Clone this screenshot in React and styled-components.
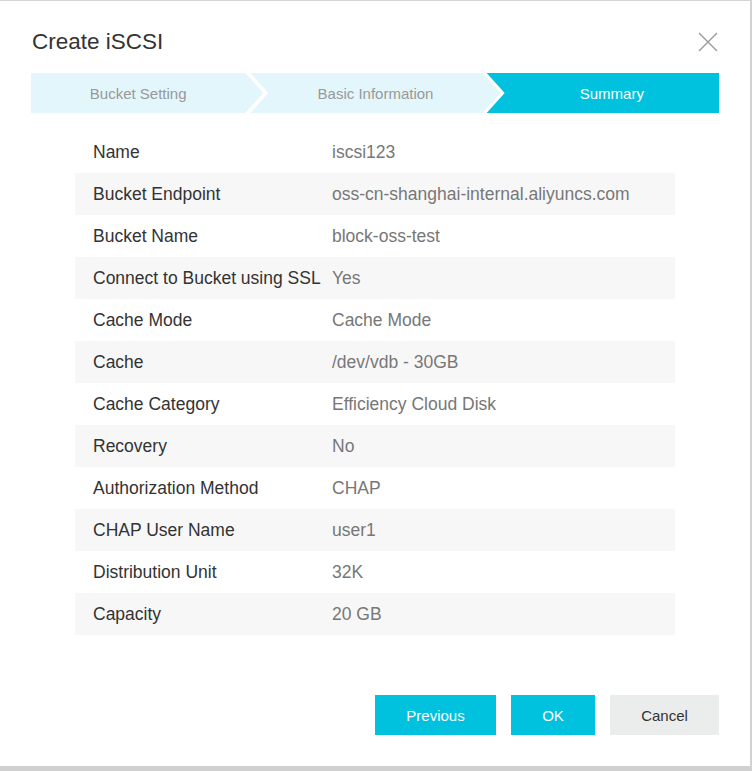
import React from 'react';
import styled, { createGlobalStyle } from 'styled-components';

const GlobalStyle = createGlobalStyle`
  html, body {
    margin: 0;
    padding: 0;
    background: #fff;
    font-family: "Liberation Sans", Arial, sans-serif;
  }
`;

const Dialog = styled.div`
  width: 752px;
  height: 771px;
  box-sizing: border-box;
  background: #fff;
  border-top: 1px solid #d4d4d4;
  border-right: 2px solid #d2d2d2;
  border-bottom: 5px solid #d0d0d0;
  padding: 0 31px;
  display: flex;
  flex-direction: column;
  position: relative;
`;

const Header = styled.div`
  display: flex;
  align-items: center;
  justify-content: space-between;
  padding-top: 26px;
  height: 30px;
`;

const Title = styled.h2`
  margin: 0 0 0 1px;
  font-size: 22.5px;
  line-height: 30px;
  font-weight: normal;
  color: #333;
`;

const CloseButton = styled.button`
  border: none;
  background: none;
  padding: 0;
  width: 20px;
  height: 20px;
  margin-right: 1px;
  cursor: pointer;
  display: flex;
`;

const Steps = styled.div`
  display: flex;
  margin-top: 16px;
  height: 40px;
`;

const Step = styled.div`
  flex: 1 1 0;
  height: 40px;
  display: flex;
  align-items: center;
  justify-content: center;
  font-size: 15px;
  padding-left: ${(p) => (p.$first ? 0 : 18)}px;
  padding-right: ${(p) => (p.$last ? 0 : 18)}px;
  margin-left: ${(p) => (p.$first ? 0 : p.$last ? -14 : -13)}px;
  background: ${(p) => (p.$active ? '#00c1de' : '#e3f6fb')};
  color: ${(p) => (p.$active ? '#fff' : '#999')};
  clip-path: polygon(
    0 0,
    ${(p) => (p.$last ? '100% 0, 100% 100%' : 'calc(100% - 18px) 0, 100% 50%, calc(100% - 18px) 100%')},
    0 100%,
    ${(p) => (p.$first ? '0 50%' : '18px 50%')}
  );
`;

const Table = styled.div`
  width: 600px;
  margin: 18px auto 0;
  display: flex;
  flex-direction: column;
`;

const Row = styled.div`
  display: flex;
  align-items: center;
  height: 42px;
  padding-left: 18px;
  font-size: 17.5px;
  background: ${(p) => (p.$striped ? '#f7f7f7' : '#fff')};
`;

const Label = styled.div`
  width: 239px;
  flex-shrink: 0;
  color: #333;
  white-space: nowrap;
`;

const Value = styled.div`
  color: #777;
  white-space: nowrap;
`;

const Footer = styled.div`
  display: flex;
  justify-content: flex-end;
  gap: 14px;
  margin-top: 60px;
`;

const Button = styled.button`
  height: 40px;
  min-width: ${(p) => p.$width}px;
  border: none;
  font-family: inherit;
  font-size: 15px;
  cursor: pointer;
  background: ${(p) => (p.$primary ? '#00c1de' : '#ebecec')};
  color: ${(p) => (p.$primary ? '#fff' : '#333')};
  & + & {
    margin-left: ${(p) => (p.$primary ? 0 : 1)}px;
  }
`;

const rows = [
  ['Name', 'iscsi123'],
  ['Bucket Endpoint', 'oss-cn-shanghai-internal.aliyuncs.com'],
  ['Bucket Name', 'block-oss-test'],
  ['Connect to Bucket using SSL', 'Yes'],
  ['Cache Mode', 'Cache Mode'],
  ['Cache', '/dev/vdb - 30GB'],
  ['Cache Category', 'Efficiency Cloud Disk'],
  ['Recovery', 'No'],
  ['Authorization Method', 'CHAP'],
  ['CHAP User Name', 'user1'],
  ['Distribution Unit', '32K'],
  ['Capacity', '20 GB'],
];

const steps = ['Bucket Setting', 'Basic Information', 'Summary'];

export default function App() {
  return (
    <>
      <GlobalStyle />
      <Dialog>
        <Header>
          <Title>Create iSCSI</Title>
          <CloseButton aria-label="close">
            <svg width="20" height="20" viewBox="0 0 20 20">
              <path d="M1 1L19 19M19 1L1 19" stroke="#9a9a9a" strokeWidth="1.4" fill="none" />
            </svg>
          </CloseButton>
        </Header>
        <Steps>
          {steps.map((s, i) => (
            <Step
              key={s}
              $first={i === 0}
              $last={i === steps.length - 1}
              $active={i === steps.length - 1}
            >
              {s}
            </Step>
          ))}
        </Steps>
        <Table>
          {rows.map(([k, v], i) => (
            <Row key={k} $striped={i % 2 === 1}>
              <Label>{k}</Label>
              <Value>{v}</Value>
            </Row>
          ))}
        </Table>
        <Footer>
          <Button $primary $width={121}>Previous</Button>
          <Button $primary $width={84}>OK</Button>
          <Button $width={109}>Cancel</Button>
        </Footer>
      </Dialog>
    </>
  );
}
